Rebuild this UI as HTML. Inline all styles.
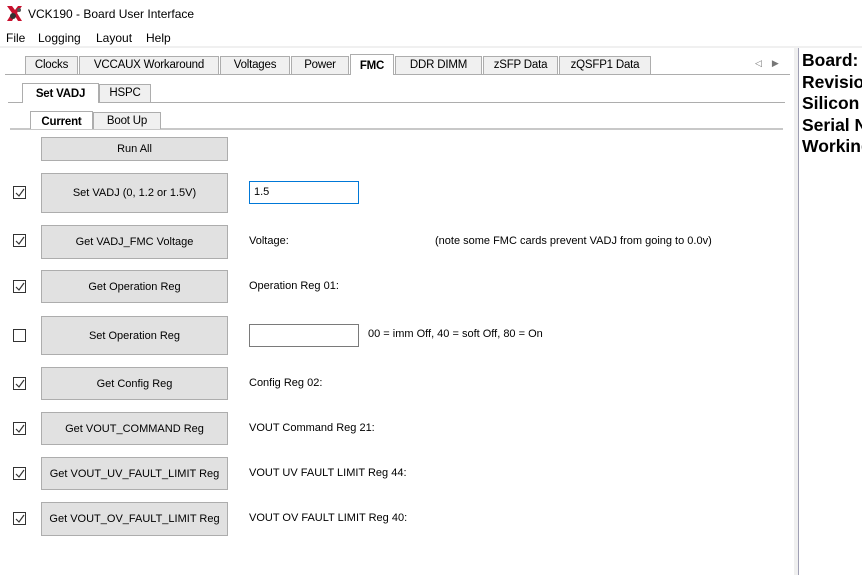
<!DOCTYPE html>
<html><head><style>
*{margin:0;padding:0;box-sizing:border-box}
body{width:862px;height:575px;background:#fff;font-family:"Liberation Sans",sans-serif;font-size:12px;color:#000;position:relative;overflow:hidden}
.a{position:absolute;white-space:nowrap}
.tab{position:absolute;height:18px;border:1px solid #adadad;border-bottom:none;background:#f0f0f0;text-align:center;line-height:17px;font-size:11.5px;letter-spacing:-0.2px;white-space:nowrap}
.sel{background:#fff;font-weight:bold;z-index:2}
.btn{position:absolute;left:41px;width:187px;background:#e1e1e1;border:1px solid #adadad;display:flex;align-items:center;justify-content:center;font-size:11px;white-space:nowrap}
.cb{position:absolute;left:13px;width:13px;height:13px;border:1px solid #333;background:#fff}
.cb svg{position:absolute;left:1px;top:1px}
.lbl{position:absolute;left:249px;font-size:11px;white-space:nowrap}
.inp{position:absolute;left:249px;width:110px;height:23px;border:1px solid #7a7a7a;background:#fff}
.r{position:absolute;left:802px;font:bold 17.5px "Liberation Sans",sans-serif;line-height:21.5px}
</style></head><body>
<svg class="a" style="left:6px;top:5px" width="17" height="17" viewBox="0 0 17 17"><path d="M1 1h5l3 4 3-4h4l-5 7 5 8h-4l-3-5-3 5H1l5-8z" fill="#c8102e"/><circle cx="7" cy="11" r="3" fill="#333"/><circle cx="13" cy="5" r="2" fill="#555"/></svg>
<div class="a" style="left:28px;top:7px;font-size:12px">VCK190 - Board User Interface</div>
<div class="a" style="left:6px;top:31px;font-size:12px">File</div>
<div class="a" style="left:38px;top:31px;font-size:12px">Logging</div>
<div class="a" style="left:96px;top:31px;font-size:12px">Layout</div>
<div class="a" style="left:146px;top:31px;font-size:12px">Help</div>
<div class="a" style="left:0;top:46px;width:862px;height:2px;background:#f0f0f0"></div>
<div class="a" style="left:794px;top:48px;width:4px;height:527px;background:#f0f0f0"></div>
<div class="a" style="left:798px;top:48px;width:1px;height:527px;background:#a0a0b4"></div>
<div class="r" style="top:50px">Board:<br>Revision<br>Silicon<br>Serial N<br>Working</div>
<div class="a" style="left:5px;top:74px;width:785px;height:1px;background:#adadad"></div>
<div class="tab" style="left:25px;top:56px;width:53px">Clocks</div>
<div class="tab" style="left:79px;top:56px;width:140px">VCCAUX Workaround</div>
<div class="tab" style="left:220px;top:56px;width:70px">Voltages</div>
<div class="tab" style="left:291px;top:56px;width:58px">Power</div>
<div class="tab sel" style="left:350px;top:54px;width:44px;height:21px;line-height:22px">FMC</div>
<div class="tab" style="left:395px;top:56px;width:87px">DDR DIMM</div>
<div class="tab" style="left:483px;top:56px;width:75px">zSFP Data</div>
<div class="tab" style="left:559px;top:56px;width:92px">zQSFP1 Data</div>
<div class="a" style="left:755px;top:58px;font-size:9px;color:#777">&#9665;&nbsp;&nbsp;&nbsp;&nbsp;&#9654;</div>
<div class="a" style="left:8px;top:102px;width:777px;height:1px;background:#adadad"></div>
<div class="tab sel" style="left:22px;top:83px;width:77px;height:20px;line-height:21px">Set VADJ</div>
<div class="tab" style="left:99px;top:84px;width:52px">HSPC</div>
<div class="a" style="left:10px;top:128px;width:773px;height:2px;background:#c8c8c8"></div>
<div class="tab sel" style="left:30px;top:111px;width:63px;height:18px;line-height:20px">Current</div>
<div class="tab" style="left:93px;top:112px;width:68px;height:17px">Boot Up</div>
<div class="btn" style="top:137px;height:24px">Run All</div>
<div class="cb" style="top:186px"><svg width="10" height="10"><path d="M1 5l3 3 5-7" stroke="#333" fill="none" stroke-width="1.2"/></svg></div>
<div class="btn" style="top:173px;height:40px">Set VADJ (0, 1.2 or 1.5V)</div>
<div class="inp" style="top:181px;border-color:#0078d7"></div>
<div class="lbl" style="left:254px;top:186px">1.5</div>
<div class="cb" style="top:234px"><svg width="10" height="10"><path d="M1 5l3 3 5-7" stroke="#333" fill="none" stroke-width="1.2"/></svg></div>
<div class="btn" style="top:225px;height:34px">Get VADJ_FMC Voltage</div>
<div class="lbl" style="top:235px">Voltage:</div>
<div class="lbl" style="left:435px;top:235px">(note some FMC cards prevent VADJ from going to 0.0v)</div>
<div class="cb" style="top:280px"><svg width="10" height="10"><path d="M1 5l3 3 5-7" stroke="#333" fill="none" stroke-width="1.2"/></svg></div>
<div class="btn" style="top:270px;height:33px">Get Operation Reg</div>
<div class="lbl" style="top:280px">Operation Reg 01:</div>
<div class="cb" style="top:329px"></div>
<div class="btn" style="top:316px;height:39px">Set Operation Reg</div>
<div class="inp" style="top:324px"></div>
<div class="lbl" style="left:368px;top:328px">00 = imm Off, 40 = soft Off, 80 = On</div>
<div class="cb" style="top:377px"><svg width="10" height="10"><path d="M1 5l3 3 5-7" stroke="#333" fill="none" stroke-width="1.2"/></svg></div>
<div class="btn" style="top:367px;height:33px">Get Config Reg</div>
<div class="lbl" style="top:377px">Config Reg 02:</div>
<div class="cb" style="top:422px"><svg width="10" height="10"><path d="M1 5l3 3 5-7" stroke="#333" fill="none" stroke-width="1.2"/></svg></div>
<div class="btn" style="top:412px;height:33px">Get VOUT_COMMAND Reg</div>
<div class="lbl" style="top:422px">VOUT Command Reg 21:</div>
<div class="cb" style="top:467px"><svg width="10" height="10"><path d="M1 5l3 3 5-7" stroke="#333" fill="none" stroke-width="1.2"/></svg></div>
<div class="btn" style="top:457px;height:33px">Get VOUT_UV_FAULT_LIMIT Reg</div>
<div class="lbl" style="top:467px">VOUT UV FAULT LIMIT Reg 44:</div>
<div class="cb" style="top:512px"><svg width="10" height="10"><path d="M1 5l3 3 5-7" stroke="#333" fill="none" stroke-width="1.2"/></svg></div>
<div class="btn" style="top:502px;height:34px">Get VOUT_OV_FAULT_LIMIT Reg</div>
<div class="lbl" style="top:512px">VOUT OV FAULT LIMIT Reg 40:</div>
</body></html>
